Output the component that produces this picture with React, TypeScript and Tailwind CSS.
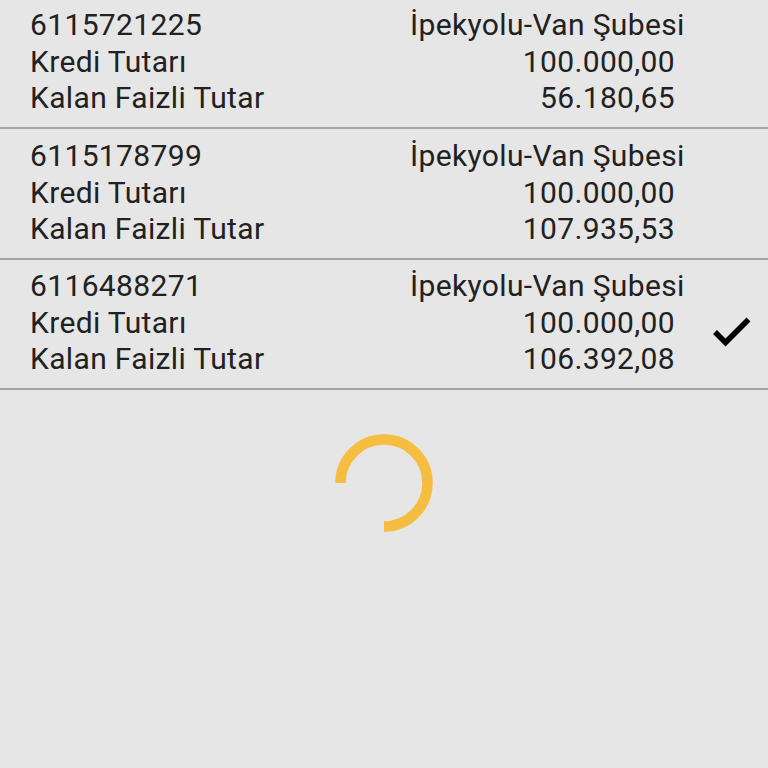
import React from "react";

type Item = { no: string; branch: string; amount: string; remaining: string; selected?: boolean; h: string };

const items: Item[] = [
  { no: "6115721225", branch: "İpekyolu-Van Şubesi", amount: "100.000,00", remaining: "56.180,65", h: "h-[129px] pt-[7px]" },
  { no: "6115178799", branch: "İpekyolu-Van Şubesi", amount: "100.000,00", remaining: "107.935,53", h: "h-[131px] pt-[9px]" },
  { no: "6116488271", branch: "İpekyolu-Van Şubesi", amount: "100.000,00", remaining: "106.392,08", selected: true, h: "h-[130px] pt-[8px]" },
];

function Check() {
  return (
    <svg width="44" height="40" viewBox="0 0 44 40" fill="none">
      <polyline points="5,24 15.5,34.5 38.5,11.5" stroke="#000" strokeWidth="5.5" strokeLinecap="butt" strokeLinejoin="miter" />
    </svg>
  );
}

export default function App() {
  return (
    <div
      className="w-[768px] h-[768px] bg-[#e6e6e6] text-[#212121] overflow-hidden"
      style={{ fontFamily: "Roboto, 'Noto Sans', sans-serif" }}
    >
      {items.map((it) => (
        <div key={it.no} className={`flex border-b-2 border-[#a3a3a3] box-border ${it.h}`}>
          <div className="flex-1 pl-[30px] text-[30px] leading-[35.5px] tracking-[0.35px]">
            <div className="mb-[1.5px]">{it.no}</div>
            <div>Kredi Tutarı</div>
            <div>Kalan Faizli Tutar</div>
          </div>
          <div className="w-[265px] text-[30px] leading-[35.5px] tracking-[0.35px]">
            <div className="whitespace-nowrap mb-[1.5px]">{it.branch}</div>
            <div className="text-right">{it.amount}</div>
            <div className="text-right">{it.remaining}</div>
          </div>
          <div className="w-[93px] pl-[35px] pt-[40px]">{it.selected ? <Check /> : null}</div>
        </div>
      ))}
      <div className="flex justify-center pt-[43px]">
        <svg width="100" height="100" viewBox="0 0 100 100">
          <path
            d="M 6.5 50 A 43.5 43.5 0 1 1 50 93.5"
            fill="none"
            stroke="#F6BE41"
            strokeWidth="10.5"
          />
        </svg>
      </div>
    </div>
  );
}
